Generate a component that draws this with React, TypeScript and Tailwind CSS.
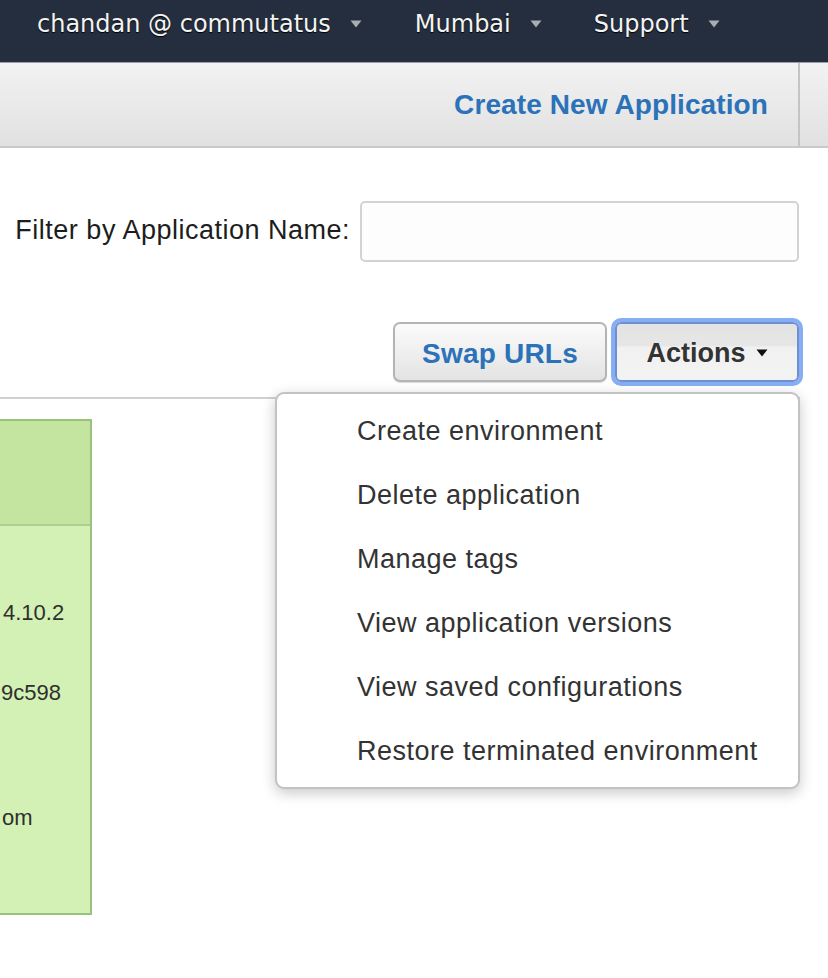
import React from "react";

const Caret = ({ color = "#a9adb3" }: { color?: string }) => (
  <svg width="12" height="8" viewBox="0 0 12 8" className="shrink-0">
    <path d="M0.5 0.5 L11.5 0.5 L6 7.5 Z" fill={color} />
  </svg>
);

const menuItems = [
  "Create environment",
  "Delete application",
  "Manage tags",
  "View application versions",
  "View saved configurations",
  "Restore terminated environment",
];

export default function App() {
  return (
    <div className="relative w-[828px] h-[978px] overflow-hidden bg-white font-['Liberation_Sans',Arial,sans-serif]">
      {/* Top nav */}
      <div className="h-[62px] bg-[#252e3e] flex items-start pt-[8px] pl-[37px] font-['DejaVu_Sans',Verdana,sans-serif] text-[24px] text-[#f4f4f4] [text-shadow:0_1px_1px_#000]">
        <div className="flex items-center h-[32px] gap-[19px]">
          <span>chandan @ commutatus</span>
          <Caret />
        </div>
        <div className="flex items-center h-[32px] gap-[19px] ml-[53px]">
          <span>Mumbai</span>
          <Caret />
        </div>
        <div className="flex items-center h-[32px] gap-[19px] ml-[52px]">
          <span>Support</span>
          <Caret />
        </div>
      </div>

      {/* Toolbar */}
      <div className="h-[86px] border-t border-[#9aa0a8] border-b-2 border-b-[#c9c9c9] bg-gradient-to-b from-[#f2f2f2] to-[#e1e1e1] flex">
        <div className="flex-1 flex items-center justify-end pr-[30px]">
          <span className="text-[28px] font-bold text-[#2b72b9] tracking-[0.1px]">Create New Application</span>
        </div>
        <div className="w-[2px] bg-[#c4c4c4]" />
        <div className="w-[28px]" />
      </div>

      {/* Filter */}
      <div className="mt-[53px] flex items-center justify-end pr-[29px] gap-[10px]">
        <label className="text-[27px] text-[#1d1d1d] tracking-[0.5px] -mt-[3px]">Filter by Application Name:</label>
        <div className="w-[439px] h-[61px] rounded-[5px] border-2 border-[#d3d3d3] bg-[#fdfdfd]" />
      </div>

      {/* Buttons */}
      <div className="mt-[60px] flex justify-end items-center pr-[29px] gap-[8px]">
        <button className="w-[214px] h-[60px] pt-[4px] rounded-[7px] border-2 border-[#b4b4b4] bg-gradient-to-b from-[#fbfbfb] to-[#e3e3e3] shadow-[0_1px_1px_rgba(0,0,0,0.15)] text-[28px] font-bold text-[#2b72b9] tracking-[0.2px]">
          Swap URLs
        </button>
        <button className="w-[184px] h-[60px] pt-[2px] rounded-[6px] border-2 border-[#6f8fcf] ring-[4px] ring-[#86aef5] bg-[linear-gradient(to_bottom,#e3e3e3_0%,#e6e6e6_38%,#f1f1f1_42%,#f3f3f3_100%)] flex items-center justify-center gap-[10px] text-[27px] font-bold text-[#333]">
          <span>Actions</span>
          <Caret color="#111" />
        </button>
      </div>

      {/* Divider line */}
      <div className="mt-[15px] h-[2px] w-[800px] bg-[#d0d0d0]" />

      {/* Green table fragment */}
      <div className="mt-[20px] w-[92px] h-[496px] border-2 border-l-0 border-[#99c27b] bg-[#d3f1b4] flex flex-col text-[22px] text-[#2f2f2f]">
        <div className="h-[105px] bg-[#c3e59f] border-b-2 border-[#a9d18b] shrink-0" />
        <div className="flex flex-col">
          <div className="mt-[74px] pl-[3px] whitespace-nowrap leading-[26px]">4.10.2</div>
          <div className="mt-[54px] pl-[1px] whitespace-nowrap leading-[26px]">9c598</div>
          <div className="mt-[99px] pl-[2px] whitespace-nowrap leading-[26px]">om</div>
        </div>
      </div>

      {/* Dropdown menu */}
      <div className="absolute left-[275px] top-[392px] w-[525px] h-[397px] rounded-[9px] border-2 border-[#c2c2c2] bg-white shadow-[0_4px_14px_rgba(0,0,0,0.22)] pt-[5px]">
        {menuItems.map((item) => (
          <div key={item} className="h-[64px] flex items-center pl-[80px] text-[27px] text-[#333] tracking-[0.5px]">
            {item}
          </div>
        ))}
      </div>
    </div>
  );
}
